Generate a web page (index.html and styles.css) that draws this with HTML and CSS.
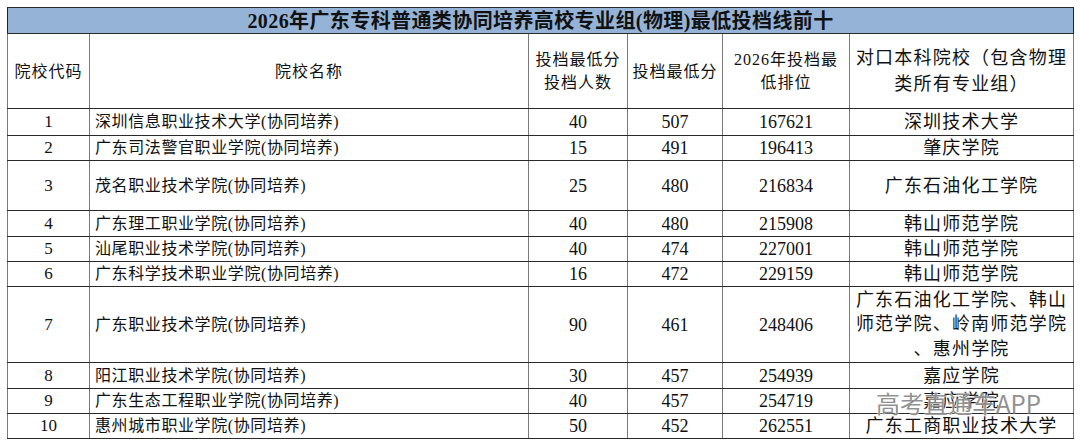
FILE: index.html
```html
<!DOCTYPE html>
<html lang="zh-CN">
<head>
<meta charset="utf-8">
<title>2026年广东专科普通类协同培养高校专业组(物理)最低投档线前十</title>
<link rel="stylesheet" href="styles.css">
</head>
<body>
<div class="sheet">
  <table class="grid">
    <colgroup>
      <col class="c1"><col class="c2"><col class="c3"><col class="c4"><col class="c5"><col class="c6">
    </colgroup>
    <thead>
      <tr class="title-row"><th colspan="6" class="title">2026年广东专科普通类协同培养高校专业组(物理)最低投档线前十</th></tr>
      <tr class="head-row">
        <th class="h">院校代码</th>
        <th class="h">院校名称</th>
        <th class="h">投档最低分<br>投档人数</th>
        <th class="h">投档最低分</th>
        <th class="h">2026年投档最<br>低排位</th>
        <th class="h h6">对口本科院校（包含物理<br>类所有专业组）</th>
      </tr>
    </thead>
    <tbody>
      <tr class="r27"><td class="code">1</td><td class="name">深圳信息职业技术大学(协同培养)</td><td class="num">40</td><td class="num">507</td><td class="num">167621</td><td class="uni">深圳技术大学</td></tr>
      <tr class="r25"><td class="code">2</td><td class="name">广东司法警官职业学院(协同培养)</td><td class="num">15</td><td class="num">491</td><td class="num">196413</td><td class="uni">肇庆学院</td></tr>
      <tr class="r50"><td class="code">3</td><td class="name">茂名职业技术学院(协同培养)</td><td class="num">25</td><td class="num">480</td><td class="num">216834</td><td class="uni">广东石油化工学院</td></tr>
      <tr class="r26"><td class="code">4</td><td class="name">广东理工职业学院(协同培养)</td><td class="num">40</td><td class="num">480</td><td class="num">215908</td><td class="uni">韩山师范学院</td></tr>
      <tr class="r25"><td class="code">5</td><td class="name">汕尾职业技术学院(协同培养)</td><td class="num">40</td><td class="num">474</td><td class="num">227001</td><td class="uni">韩山师范学院</td></tr>
      <tr class="r25"><td class="code">6</td><td class="name">广东科学技术职业学院(协同培养)</td><td class="num">16</td><td class="num">472</td><td class="num">229159</td><td class="uni">韩山师范学院</td></tr>
      <tr class="r76"><td class="code">7</td><td class="name">广东职业技术学院(协同培养)</td><td class="num">90</td><td class="num">461</td><td class="num">248406</td><td class="uni multi">广东石油化工学院、韩山<br>师范学院、岭南师范学院<br>、惠州学院</td></tr>
      <tr class="r26"><td class="code">8</td><td class="name">阳江职业技术学院(协同培养)</td><td class="num">30</td><td class="num">457</td><td class="num">254939</td><td class="uni">嘉应学院</td></tr>
      <tr class="r25"><td class="code">9</td><td class="name">广东生态工程职业学院(协同培养)</td><td class="num">40</td><td class="num">457</td><td class="num">254719</td><td class="uni">嘉应学院</td></tr>
      <tr class="r25"><td class="code">10</td><td class="name">惠州城市职业学院(协同培养)</td><td class="num">50</td><td class="num">452</td><td class="num">262551</td><td class="uni">广东工商职业技术大学</td></tr>
    </tbody>
  </table>
  <div class="watermark">高考直通车APP</div>
</div>
</body>
</html>
```

FILE: styles.css
```css
html, body {
  margin: 0;
  padding: 0;
  background: #ffffff;
}

body {
  font-family: "Liberation Serif", "Noto Sans CJK SC", serif;
  color: #111111;
}

.sheet {
  position: relative;
  padding: 7px 0 0 7px;
  width: 1066px;
}

.grid {
  border-collapse: collapse;
  table-layout: fixed;
  width: 1066px;
  border-left: 1px solid #222;
  border-right: 1px solid #222;
  border-top: 1px solid #222;
  border-bottom: 1px solid #222;
}

.c1 { width: 82px; }
.c2 { width: 439px; }
.c3 { width: 99px; }
.c4 { width: 95px; }
.c5 { width: 127px; }
.c6 { width: 224px; }

.grid th,
.grid td {
  padding: 0;
  border-left: 1px solid #7a7a7a;
  border-right: 1px solid #7a7a7a;
  border-top: 1px solid #2a2a2a;
  border-bottom: 1px solid #2a2a2a;
  vertical-align: middle;
  text-align: center;
  white-space: nowrap;
  overflow: visible;
}

.grid .title {
  background: #95b3d7;
  height: 25px;
  font-size: 20px;
  font-weight: bold;
  letter-spacing: 0.4px;
  line-height: 24px;
  border-left-color: #222;
  border-right-color: #222;
}

.head-row { height: 75px; }

.grid .h {
  font-weight: normal;
  font-size: 16px;
  letter-spacing: 1px;
  line-height: 23px;
}

.grid .h6 {
  font-size: 18px;
  letter-spacing: 1.2px;
  line-height: 26px;
}

.r25 { height: 25px; }
.r26 { height: 26px; }
.r27 { height: 27px; }
.r50 { height: 50px; }
.r76 { height: 76px; }

.grid .code {
  font-size: 17px;
  line-height: 22px;
}

.grid .name {
  text-align: left;
  padding-left: 5px;
  font-size: 16px;
  letter-spacing: 0.6px;
  line-height: 22px;
}

.grid .num {
  font-size: 18px;
  line-height: 22px;
}

.grid .uni {
  font-size: 18px;
  letter-spacing: 1.2px;
  line-height: 22px;
}

.grid .multi {
  line-height: 24.5px;
}

.watermark {
  position: absolute;
  left: 876px;
  top: 389px;
  font-family: "Noto Sans CJK SC", "Noto Sans", sans-serif;
  font-size: 24px;
  line-height: 28px;
  color: #8c8c8c;
  text-shadow: 0 0 1px #fff, 0 0 2px #fff;
  white-space: nowrap;
  opacity: 0.95;
}
```
